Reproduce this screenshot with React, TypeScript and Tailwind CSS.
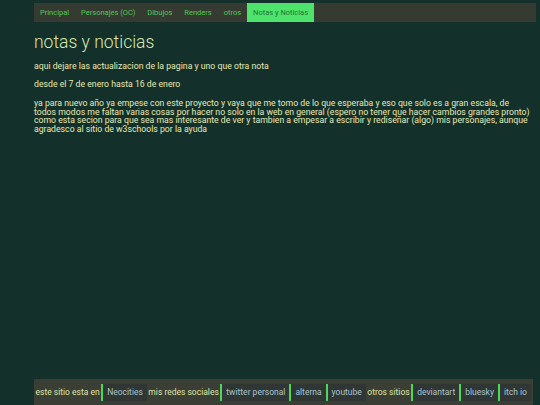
import React from 'react'

const navLinks = ['Principal', 'Personajes (OC)', 'Dibujos', 'Renders', 'otros']

const Link = ({ children }: { children: React.ReactNode }) => (
    <span className="flex items-stretch h-[17px]">
        <span className="w-[2px] bg-[#4bd65c]" />
        <span className="bg-[#2f3633] text-[#a9c3cf] px-[4px] flex items-center">{children}</span>
    </span>
)

const Label = ({ children }: { children: React.ReactNode }) => (
    <span className="text-[#dfe3a6] px-[1.5px]">{children}</span>
)

const App = () => {
    return (
        <div className="min-h-[405px] bg-[#14302a] flex flex-col font-['Roboto',sans-serif]">
            {/* top navigation */}
            <nav className="mt-[3px] ml-[34px] mr-[4px] h-[19px] bg-[#363b32] flex items-stretch text-[7.5px] text-[#4fc65a]">
                {navLinks.map(l => (
                    <a key={l} href="#" className="px-[6px] flex items-center">{l}</a>
                ))}
                <a href="#" className="px-[6px] flex items-center bg-[#4ee36a] text-[#23773a]">Notas y Noticias</a>
            </nav>

            {/* content */}
            <main className="ml-[34px] mr-[8px] text-[#e6e9b4]">
                <h1 className="text-[17.5px] font-light text-[#d8e8b0] mt-[7px] leading-[26px]">notas y noticias</h1>
                <p className="text-[8.7px] mt-[5px]">aqui dejare las actualizacion de la pagina y uno que otra nota</p>
                <p className="text-[8.7px] mt-[5px]">desde el 7 de enero hasta 16 de enero</p>
                <p className="text-[8.7px] leading-[8.6px] mt-[8px]">
                    ya para nuevo año ya empese con este proyecto y vaya que me tomo de lo que esperaba y eso que solo es a gran escala, de todos modos me faltan varias cosas por hacer no solo en la web en general (espero no tener que hacer cambios grandes pronto) como esta secion para que sea mas interesante de ver y tambien a empesar a escribir y rediseñar (algo) mis personajes, aunque agradesco al sitio de w3schools por la ayuda
                </p>
            </main>

            {/* footer */}
            <footer className="mt-auto ml-[34px] mr-[7px] h-[26px] bg-[#3a3e35] flex items-center text-[8.5px] whitespace-nowrap">
                <Label>este sitio esta en</Label>
                <Link>Neocities</Link>
                <Label>mis redes sociales</Label>
                <Link>twitter personal</Link>
                <Link>alterna</Link>
                <Link>youtube</Link>
                <Label>otros sitios</Label>
                <Link>deviantart</Link>
                <Link>bluesky</Link>
                <Link>itch io</Link>
            </footer>
        </div>
    )
}
export default App
